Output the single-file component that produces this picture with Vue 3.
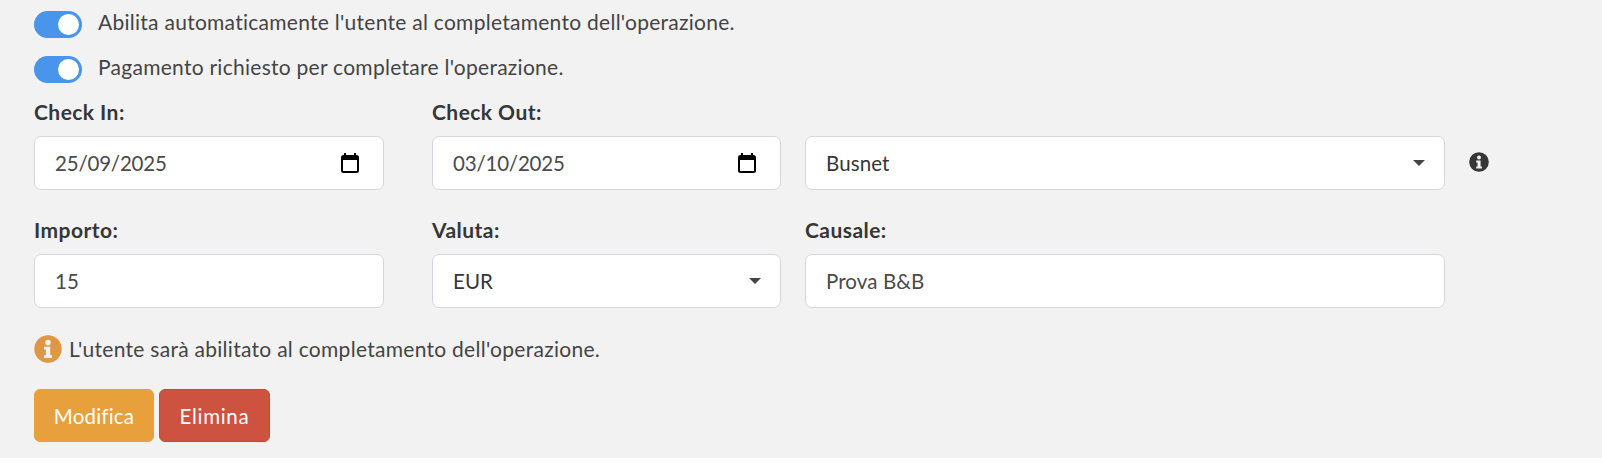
<script setup>
const toggles = [
  "Abilita automaticamente l'utente al completamento dell'operazione.",
  "Pagamento richiesto per completare l'operazione."
]
</script>

<template>
  <div class="page">
    <div class="panel">
      <div v-for="t in toggles" :key="t" class="toggle-row">
        <span class="switch"><span class="knob"></span></span>
        <span class="toggle-text">{{ t }}</span>
      </div>

      <div class="grid first">
        <div class="field">
          <label>Check In:</label>
          <div class="control">
            <span class="date">25/09/2025</span>
            <svg class="cal" viewBox="0 0 18 20" width="18" height="20"><path d="M4 0v3M14 0v3" stroke="#000" stroke-width="2" fill="none"/><rect x="1" y="3" width="16" height="16" rx="1.5" fill="none" stroke="#000" stroke-width="2"/><path d="M1 5.5h16" stroke="#000" stroke-width="3"/></svg>
          </div>
        </div>
        <div class="field">
          <label>Check Out:</label>
          <div class="control">
            <span class="date">03/10/2025</span>
            <svg class="cal" viewBox="0 0 18 20" width="18" height="20"><path d="M4 0v3M14 0v3" stroke="#000" stroke-width="2" fill="none"/><rect x="1" y="3" width="16" height="16" rx="1.5" fill="none" stroke="#000" stroke-width="2"/><path d="M1 5.5h16" stroke="#000" stroke-width="3"/></svg>
          </div>
        </div>
        <div class="field no-label">
          <div class="control">
            <span class="dark">Busnet</span>
            <span class="caret"></span>
          </div>
        </div>
        <div class="info-cell">
          <svg viewBox="0 0 20 20" width="20" height="20"><circle cx="10" cy="10" r="9.8" fill="#363636"/><circle cx="10" cy="5.4" r="2" fill="#f2f2f2"/><path d="M7.2 8.4h4.4v6h1.3v2H7.2v-2h1.3v-4h-1.3z" fill="#f2f2f2"/></svg>
        </div>
      </div>

      <div class="grid second">
        <div class="field">
          <label>Importo:</label>
          <div class="control"><span>15</span></div>
        </div>
        <div class="field">
          <label>Valuta:</label>
          <div class="control"><span class="dark">EUR</span><span class="caret"></span></div>
        </div>
        <div class="field">
          <label>Causale:</label>
          <div class="control"><span>Prova B&amp;B</span></div>
        </div>
      </div>

      <div class="notice">
        <svg viewBox="0 0 28 28" width="28" height="28"><circle cx="14" cy="14" r="13.7" fill="#e09643"/><circle cx="14" cy="7.6" r="2.8" fill="#f2f2f2"/><path d="M10 11.8h6.2v8.4h1.9v2.8H10v-2.8h1.9v-5.6H10z" fill="#f2f2f2"/></svg>
        <span>L'utente sarà abilitato al completamento dell'operazione.</span>
      </div>

      <div class="actions">
        <button class="btn edit">Modifica</button>
        <button class="btn del">Elimina</button>
      </div>
    </div>
  </div>
</template>

<style scoped>
.page {
  width: 1602px;
  height: 466px;
  background: #fff;
  font-family: Lato, sans-serif;
  color: #363636;
  overflow: hidden;
}
.panel {
  height: 458px;
  box-sizing: border-box;
  background: #f2f2f2;
  padding: 11px 0 0 34px;
}
.toggle-row {
  display: flex;
  align-items: center;
  height: 27px;
  margin-bottom: 18px;
}
.switch {
  width: 48px;
  height: 27px;
  border-radius: 14px;
  background: #4a95ec;
  display: flex;
  align-items: center;
  justify-content: flex-end;
  padding-right: 3px;
  box-sizing: border-box;
}
.knob {
  width: 21px;
  height: 21px;
  border-radius: 50%;
  background: #fff;
}
.toggle-text {
  margin-left: 16px;
  padding-bottom: 6px;
  font-size: 21px;
  letter-spacing: 0.27px;
  color: #444;
}
.grid {
  display: grid;
  grid-template-columns: 398px 373px 664px 20px;
  align-items: end;
}
.field:nth-child(1) { padding-right: 48px; }
.field:nth-child(2), .field:nth-child(3) { padding-right: 24px; }
.grid.second { margin-top: 29px; }
label {
  display: block;
  height: 25px;
  line-height: 22px;
  margin-bottom: 10px;
  font-size: 21px;
  letter-spacing: 0.45px;
  font-weight: 700;
  color: #363636;
}
.control {
  height: 54px;
  box-sizing: border-box;
  background: #fff;
  border: 1px solid #d6d6e0;
  border-radius: 7px;
  padding: 0 19px 0 20px;
  display: flex;
  align-items: center;
  justify-content: space-between;
  font-size: 20.5px;
  letter-spacing: 0.1px;
  color: #4a4a4a;
}
.date { letter-spacing: -0.2px; }
.dark { color: #363636; }
.cal { margin-right: 5px; }
.caret {
  width: 0;
  height: 0;
  border-left: 6.5px solid transparent;
  border-right: 6.5px solid transparent;
  border-top: 6.5px solid #444;
}
.info-cell {
  display: flex;
  height: 54px;
  padding-top: 16px;
  box-sizing: border-box;
}
.notice {
  display: flex;
  align-items: center;
  margin-top: 27px;
  height: 28px;
  font-size: 21px;
  letter-spacing: 0.28px;
  color: #444;
}
.notice span { margin-left: 7px; padding-bottom: 2px; }
.actions {
  display: flex;
  gap: 5px;
  margin-top: 26px;
}
.btn {
  height: 53px;
  border-radius: 6px;
  font-family: inherit;
  font-size: 20.5px;
  letter-spacing: 0.2px;
  color: #fff;
  padding: 0;
}
.edit { width: 120px; background: #e8a03c; border: 1px solid #e8a03c; }
.del { width: 111px; background: #cd5340; border: 1px solid #c04a38; letter-spacing: 0.7px; }
</style>
